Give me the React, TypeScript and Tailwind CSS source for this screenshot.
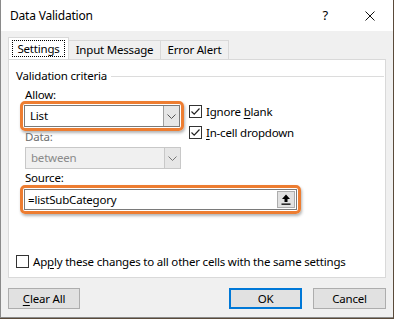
import React from "react";

/**
 * Excel "Data Validation" dialog — Settings tab, with the two
 * callout rings (Allow + Source) drawn round the fields.
 */

const font = "font-['Segoe_UI','Noto_Sans','Liberation_Sans',sans-serif]";

function Check({ checked }: { checked?: boolean }) {
  return (
    <span className="w-[13px] h-[13px] shrink-0 border border-[#333] bg-white flex items-center justify-center">
      {checked && (
        <svg width="11" height="11" viewBox="0 0 11 11" fill="none">
          <path d="M1.5 5.5 L4.2 8.2 L9.5 2.5" stroke="#222" strokeWidth="1.2" />
        </svg>
      )}
    </span>
  );
}

function Chevron({ dim }: { dim?: boolean }) {
  return (
    <svg width="9" height="5" viewBox="0 0 9 5" fill="none">
      <path d="M0.5 0.5 L4.5 4.5 L8.5 0.5" stroke={dim ? "#777" : "#555"} strokeWidth="1" />
    </svg>
  );
}

function Combo({ value, disabled }: { value: string; disabled?: boolean }) {
  return (
    <div
      className={
        "w-[156px] h-[22px] flex border " +
        (disabled ? "border-[#c8c8c8] bg-[#f0f0f0]" : "border-[#7a7a7a] bg-white")
      }
    >
      <span className={"flex-1 pl-[5px] leading-[20px] " + (disabled ? "text-[#8a8a8a]" : "text-black")}>
        {value}
      </span>
      <span
        className={
          "w-[16px] flex items-center justify-center border-l " +
          (disabled ? "border-[#c8c8c8] bg-[#e6e6e6]" : "border-[#a0a0a0] bg-[#e6e6e6]")
        }
      >
        <Chevron dim={disabled} />
      </span>
    </div>
  );
}

function Ring({ children }: { children: React.ReactNode }) {
  return (
    <div className="rounded-[5px] border-[3px] border-[#ed7d31] p-[1px] shadow-[1px_2px_3px_rgba(0,0,0,0.3)] w-fit">
      {children}
    </div>
  );
}

function Button({ children, primary }: { children: React.ReactNode; primary?: boolean }) {
  return (
    <button
      type="button"
      className={
        "w-[73px] h-[21px] bg-[#e1e1e1] text-black " +
        (primary ? "border-2 border-[#0078d7]" : "border border-[#adadad]")
      }
    >
      {children}
    </button>
  );
}

export default function App() {
  return (
    <div className={`w-[394px] h-[319px] bg-[#5a4a3a] text-[11.5px] tracking-[-0.2px] text-black ${font}`}>
      <div className="w-[393px] h-[318px] border-l border-b border-[#8a8a8a] bg-[#f0f0f0] flex flex-col">
        {/* Title bar */}
        <div className="h-[31px] bg-white flex items-center shrink-0">
          <span className="pl-[9px] text-[12px]">Data Validation</span>
          <span className="ml-auto mr-[37px] text-[13px]">?</span>
          <svg className="mr-[18px]" width="10" height="10" viewBox="0 0 10 10">
            <path d="M0.5 0.5 L9.5 9.5 M9.5 0.5 L0.5 9.5" stroke="#111" strokeWidth="1" />
          </svg>
        </div>

        <div className="px-[7px] flex flex-col">
          {/* Tabs */}
          <div className="mt-[7px] h-[21px] flex items-end relative z-10">
            <div className="w-[61px] h-[22px] bg-white border border-b-0 border-[#d9d9d9] flex items-center justify-center">
              <span className="px-[4px] leading-[15px] border border-dotted border-black">Settings</span>
            </div>
            <div className="w-[92px] h-[19px] border border-l-0 border-b-0 border-[#d9d9d9] bg-[#f0f0f0] flex items-center justify-center">
              Input Message
            </div>
            <div className="w-[68px] h-[19px] border border-l-0 border-b-0 border-[#d9d9d9] bg-[#f0f0f0] flex items-center justify-center">
              Error Alert
            </div>
          </div>

          {/* Panel */}
          <div className="h-[219px] bg-white border border-[#d9d9d9] flex flex-col">
            <div className="mt-[8px] h-[16px] flex items-center pl-[7px]">
              <span className="leading-[16px]">Validation criteria</span>
              <span className="flex-1 ml-[4px] mr-[1px] h-px bg-[#dcdcdc]" />
            </div>

            <div className="flex pl-[11px]">
              <div className="flex flex-col">
                <span className="mt-[4px] ml-[5px] h-[14px] leading-[14px]">
                  Allow:
                </span>
                <div className="mt-[-1px]">
                  <Ring>
                    <Combo value="List" />
                  </Ring>
                </div>
                <span className="mt-[-1px] ml-[5px] h-[14px] leading-[14px] text-[#6d6d6d]">Data:</span>
                <div className="mt-[3px] ml-[5px]">
                  <Combo value="between" disabled />
                </div>
              </div>
              <div className="ml-[5px] mt-[21px] flex flex-col gap-[8px]">
                <label className="flex items-center gap-[4px] h-[13px]">
                  <Check checked />
                  <span>
                    Ignore <span className="underline underline-offset-2">b</span>lank
                  </span>
                </label>
                <label className="flex items-center gap-[4px] h-[13px]">
                  <Check checked />
                  <span>
                    <span className="underline underline-offset-2">I</span>n-cell dropdown
                  </span>
                </label>
              </div>
            </div>

            <span className="mt-[2px] ml-[16px] h-[14px] leading-[14px]">Source:</span>
            <div className="ml-[11px] mt-[0px]">
              <Ring>
                <div className="w-[273px] h-[21px] border border-[#7a7a7a] bg-white flex items-center">
                  <span className="flex-1 pl-[3px] leading-[19px]">=listSubCategory</span>
                  <span className="w-[18px] h-[17px] mr-[1px] bg-[#e1e1e1] border border-[#adadad] flex items-center justify-center">
                    <svg width="10" height="11" viewBox="0 0 10 11">
                      <path d="M5 0.5 L9 5 L6.5 5 L6.5 8 L3.5 8 L3.5 5 L1 5 Z" fill="#000" />
                      <rect x="0.5" y="9.5" width="9" height="1.3" fill="#000" />
                    </svg>
                  </span>
                </div>
              </Ring>
            </div>

            <label className="mt-auto mb-[9px] ml-[7px] flex items-center gap-[4px] h-[13px]">
              <Check />
              <span>
                Ap<span className="underline underline-offset-2">p</span>ly these changes to all other cells with the same settings
              </span>
            </label>
          </div>

          {/* Footer buttons */}
          <div className="mt-[10px] flex items-center">
            <button
              type="button"
              className="w-[72px] h-[21px] bg-[#e1e1e1] border border-[#adadad] text-black"
            >
              <span className="underline underline-offset-2">C</span>lear All
            </button>
            <div className="ml-auto flex gap-[11px]">
              <Button primary>OK</Button>
              <Button>Cancel</Button>
            </div>
          </div>
        </div>
      </div>
    </div>
  );
}
